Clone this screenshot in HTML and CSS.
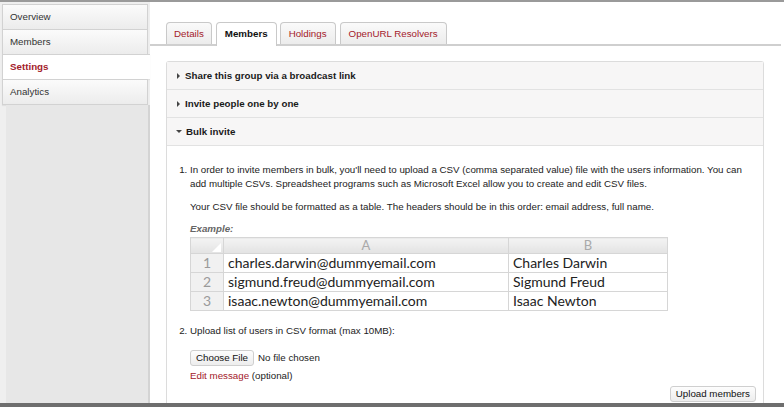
FILE: index.html
```html
<!DOCTYPE html>
<html>
<head>
<meta charset="utf-8">
<link rel="stylesheet" href="styles.css">
</head>
<body>
<div class="frame">
  <aside class="sidebar">
    <nav class="menu">
      <a class="menu-item">Overview</a>
      <a class="menu-item">Members</a>
      <a class="menu-item active">Settings</a>
      <a class="menu-item">Analytics</a>
    </nav>
    <div class="side-fill"></div>
  </aside>
  <main class="content">
    <ul class="tabs">
      <li class="tab">Details</li>
      <li class="tab active">Members</li>
      <li class="tab">Holdings</li>
      <li class="tab">OpenURL Resolvers</li>
    </ul>
    <section class="accordion">
      <div class="acc-head"><span class="caret right"></span>Share this group via a broadcast link</div>
      <div class="acc-head"><span class="caret right"></span>Invite people one by one</div>
      <div class="acc-head"><span class="caret down"></span>Bulk invite</div>
      <div class="acc-body">
        <ol class="steps">
          <li>
            <div class="line">In order to invite members in bulk, you'll need to upload a CSV (comma separated value) file with the users information. You can<br>add multiple CSVs. Spreadsheet programs such as Microsoft Excel allow you to create and edit CSV files.</div>
            <p class="para">Your CSV file should be formatted as a table. The headers should be in this order: email address, full name.</p>
            <p class="example">Example:</p>
            <table class="sheet">
              <tr class="hdr"><th class="corner"><span class="tri"></span></th><th class="col-a">A</th><th class="col-b">B</th></tr>
              <tr><td class="num">1</td><td>charles.darwin@dummyemail.com</td><td>Charles Darwin</td></tr>
              <tr><td class="num">2</td><td>sigmund.freud@dummyemail.com</td><td>Sigmund Freud</td></tr>
              <tr><td class="num">3</td><td>isaac.newton@dummyemail.com</td><td>Isaac Newton</td></tr>
            </table>
          </li>
          <li class="step2">
            <div class="line">Upload list of users in CSV format (max 10MB):</div>
            <div class="file-row"><span class="btn">Choose File</span><span class="nofile">No file chosen</span></div>
            <div class="edit"><a class="red">Edit message</a> (optional)</div>
          </li>
        </ol>
        <div class="actions"><span class="btn">Upload members</span></div>
      </div>
    </section>
  </main>
</div>
<div class="bottom-bar"></div>
</body>
</html>
```
FILE: styles.css
```css
html, body {
  margin: 0;
  padding: 0;
  background: #fff;
}
body {
  font-family: "Liberation Sans", Arial, sans-serif;
  font-size: 9.75px;
  color: #222;
  width: 784px;
  height: 407px;
  overflow: hidden;
  display: flex;
  flex-direction: column;
}
.frame {
  flex: 1;
  display: flex;
  border-top: 2px solid #9a9a9a;
  min-height: 0;
}
.sidebar {
  width: 150px;
  flex: none;
  display: flex;
  flex-direction: column;
  background: #efefef;
  padding-top: 2px;
  box-sizing: border-box;
}
.menu {
  display: flex;
  flex-direction: column;
  margin-left: 2px;
}
.menu-item {
  display: block;
  height: 24px;
  line-height: 23px;
  padding-left: 7px;
  color: #333;
  background: linear-gradient(#fbfbfb, #ececec);
  border: 1px solid #d2d2d2;
  border-bottom: none;
  margin-right: 2px;
  box-shadow: 0 1px 1px rgba(0,0,0,0.06);
}
.menu-item:last-child {
  border-bottom: 1px solid #d2d2d2;
}
.menu-item.active {
  background: #fff;
  color: #a3202a;
  font-weight: bold;
  margin-right: 0;
  border-right: none;
}
.side-fill {
  flex: 1;
  margin-left: 6px;
  background: #e7e7e7;
  border-right: 2px solid #d4d4d4;
}
.content {
  flex: 1;
  display: flex;
  flex-direction: column;
  min-width: 0;
  padding-right: 3px;
}
.tabs {
  list-style: none;
  margin: 20px 0 0 0;
  padding: 0 0 0 16px;
  display: flex;
  gap: 3px;
  border-bottom: 2px solid #cfcfcf;
  height: 22px;
}
.tab {
  height: 21px;
  line-height: 22px;
  padding: 0 8px;
  color: #a3202a;
  background: linear-gradient(#fafafa, #ececec);
  border: 1px solid #c9c9c9;
  border-bottom: none;
  border-radius: 4px 4px 0 0;
}
.tab:first-child {
  padding: 0 7px;
  margin-right: 1px;
}
.tab.active {
  background: #fff;
  color: #111;
  font-weight: bold;
  height: 23px;
  padding: 0 8px;
}
.tab:last-child {
  margin-left: 1px;
}
.accordion {
  margin: 15px 17px 0 16px;
  border: 1px solid #dcdcdc;
  border-bottom: none;
  border-radius: 3px 3px 0 0;
  flex: 1;
  display: flex;
  flex-direction: column;
}
.acc-head {
  height: 27px;
  line-height: 27px;
  background: #f7f6f6;
  border-bottom: 1px solid #e2e2e2;
  font-weight: bold;
  color: #1a1a1a;
  padding-left: 9px;
  display: flex;
  align-items: center;
}
.caret {
  width: 0;
  height: 0;
  margin-right: 5px;
  border-style: solid;
}
.caret.right {
  border-width: 3px 0 3px 3px;
  border-color: transparent transparent transparent #444;
  margin-left: 1px;
}
.caret.down {
  border-width: 3px 3px 0 3px;
  border-color: #444 transparent transparent transparent;
  margin-right: 4px;
}
.acc-body {
  flex: 1;
  padding: 17px 7px 0 0;
  line-height: 14px;
  color: #222;
}
.steps {
  margin: 0;
  padding-left: 23px;
}
.steps li {
  margin: 0;
}
.line {
  white-space: nowrap;
}
.para {
  margin: 9px 0 0 0;
}
.example {
  margin: 8px 0 0 0;
  font-style: italic;
  font-weight: bold;
  color: #666;
}
.sheet {
  margin-top: 1px;
  border-collapse: collapse;
  font-family: Lato, "Open Sans", sans-serif;
  font-size: 14px;
  color: #222;
  width: 478px;
  table-layout: fixed;
}
.sheet th, .sheet td {
  border: 1px solid #d6d6d6;
  padding: 0 0 0 4px;
  text-align: left;
  white-space: nowrap;
}
.sheet .hdr th {
  height: 15px;
  line-height: 15px;
  background: linear-gradient(#f3f3f3, #e3e3e3);
  color: #a9a9a9;
  font-weight: normal;
  text-align: center;
  padding: 0;
  font-size: 13px;
}
.sheet .corner {
  width: 32px;
  position: relative;
}
.tri {
  position: absolute;
  right: 2px;
  bottom: 1px;
  width: 0;
  height: 0;
  border-style: solid;
  border-width: 0 0 9px 9px;
  border-color: transparent transparent #fff transparent;
}
.sheet .col-a {
  width: 284px;
}
.sheet td {
  height: 18px;
  line-height: 18px;
}
.sheet .num {
  background: #f1f1f1;
  color: #9a9a9a;
  text-align: center;
  padding: 0;
}
.step2 {
  margin-top: 13px !important;
}
.file-row {
  margin-top: 12px;
  display: flex;
  align-items: center;
  height: 16px;
}
.btn {
  display: inline-block;
  height: 14px;
  line-height: 14px;
  padding: 0 5px;
  border: 1px solid #cfcfcf;
  border-radius: 3px;
  background: linear-gradient(#fdfdfd, #ededed);
  color: #111;
}
.nofile {
  margin-left: 4px;
  color: #222;
}
.edit {
  margin-top: 3px;
}
.red {
  color: #a3202a;
}
.actions {
  display: flex;
  justify-content: flex-end;
  margin-top: 3px;
}
.bottom-bar {
  height: 4px;
  flex: none;
  background: #6e6e6e;
}
```
